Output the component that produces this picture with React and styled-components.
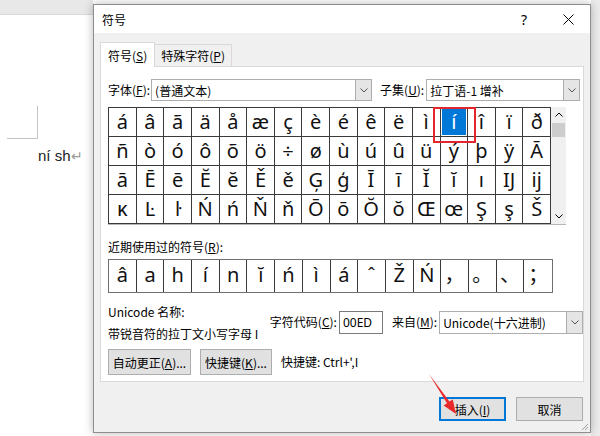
import React from 'react';
import styled, { createGlobalStyle } from 'styled-components';

const GlobalStyle = createGlobalStyle`
  html, body { margin: 0; padding: 0; }
  body {
    width: 600px; height: 436px; overflow: hidden; background: #fff;
    font-family: "Noto Sans CJK SC", "Noto Sans", sans-serif;
    color: #000;
  }
  * { box-sizing: border-box; }
`;

const Stage = styled.div`
  position: relative;
  width: 600px;
  height: 436px;
  display: flex;
  background: #fff;
  overflow: hidden;
`;

const DocArea = styled.div`
  flex: 0 0 93px;
  display: flex;
  flex-direction: column;
  background: #fff;
`;
const DocTopStrip = styled.div`
  height: 15px;
  background: #e8e8e8;
  border-bottom: 1px solid #d8d8d8;
`;
const CropMark = styled.div`
  margin: 91px 0 0 7px;
  width: 31px;
  height: 33px;
  border-right: 1px solid #c4c4c4;
  border-bottom: 1px solid #c4c4c4;
`;
const DocText = styled.div`
  margin: 8px 0 0 38px;
  font-family: "Liberation Sans", Arial, sans-serif;
  font-size: 15px;
  line-height: 18px;
  color: #222;
  white-space: nowrap;
`;
const ReturnMark = styled.span`
  color: #9a9a9a;
  font-size: 14px;
`;

const RightShade = styled.div`
  flex: 1;
  background: #ececec;
`;

const Dialog = styled.div`
  position: relative;
  z-index: 1;
  flex: 0 0 498px;
  margin-top: 4px;
  height: 429px;
  display: flex;
  flex-direction: column;
  background: #f0f0f0;
  border: 1px solid #8e8e8e;
  box-shadow: 0 0 9px rgba(0, 0, 0, 0.28);
`;

const TitleBar = styled.div`
  height: 28px;
  display: flex;
  align-items: center;
  background: #fff;
  padding-left: 8px;
`;
const TitleText = styled.div`
  flex: 1;
  font-size: 12px;
`;
const TitleBtn = styled.div`
  width: 44px;
  height: 28px;
  display: flex;
  align-items: center;
  justify-content: center;
  font-family: "Noto Sans", sans-serif;
  font-size: 14px;
`;

const Body = styled.div`
  flex: 1;
  padding: 9px 6px 0 6px;
  display: flex;
  flex-direction: column;
`;

const TabRow = styled.div`
  display: flex;
  align-items: flex-end;
  height: 25px;
  position: relative;
  z-index: 1;
  margin-bottom: -1px;
`;
const Tab = styled.div`
  height: ${p => (p.$active ? 25 : 23)}px;
  padding: 0 ${p => (p.$active ? 7 : 6)}px;
  display: flex;
  align-items: center;
  font-size: 12px;
  background: ${p => (p.$active ? '#fff' : '#f0f0f0')};
  border: 1px solid #d9d9d9;
  border-bottom: ${p => (p.$active ? 'none' : '1px solid #d9d9d9')};
  margin-left: ${p => (p.$active ? 0 : -1)}px;
  white-space: nowrap;
`;

const Panel = styled.div`
  width: 484px;
  height: 316px;
  background: #fff;
  border: 1px solid #d9d9d9;
  padding: 12px 0 0 7px;
  display: flex;
  flex-direction: column;
`;

const Row = styled.div`
  display: flex;
  align-items: center;
  margin-top: ${p => p.$mt || 0}px;
`;

const Label = styled.div`
  font-size: 12px;
  line-height: 16px;
  white-space: nowrap;
  margin-left: ${p => p.$ml || 0}px;
  margin-right: ${p => p.$mr || 0}px;
`;

const Combo = styled.div`
  display: flex;
  width: ${p => p.$w}px;
  height: ${p => p.$h || 22}px;
  border: 1px solid #adadad;
  background: #fff;
`;
const ComboText = styled.div`
  flex: 1;
  display: flex;
  align-items: center;
  padding-left: 3px;
  font-size: 12px;
  white-space: nowrap;
  overflow: hidden;
`;
const ComboBtn = styled.div`
  width: 16px;
  background: #e5e5e5;
  border-left: 1px solid #adadad;
  display: flex;
  align-items: center;
  justify-content: center;
`;

const TextBox = styled.div`
  width: 44px;
  height: 23px;
  border: 1px solid #7a7a7a;
  background: #fff;
  display: flex;
  align-items: center;
  padding-left: 3px;
  font-family: "Noto Sans", sans-serif;
  font-size: 12px;
`;

const GridWrap = styled.div`
  display: flex;
  width: 458px;
  height: 118px;
  margin-top: 6px;
  border-bottom: 1px solid #b5b5b5;
`;
const CellGrid = styled.div`
  width: 443px;
  display: grid;
  grid-template-columns: repeat(16, 1fr);
  grid-template-rows: repeat(4, 29px);
  border-top: 1px solid #3a3a3a;
  border-left: 1px solid #3a3a3a;
`;
const Cell = styled.div`
  position: ${p => (p.$selected ? 'relative' : 'static')};
  border-right: 1px solid #3a3a3a;
  border-bottom: 1px solid #3a3a3a;
  display: flex;
  align-items: center;
  justify-content: center;
  font-family: "Noto Sans", "Noto Sans CJK SC", sans-serif;
  font-size: 20px;
  line-height: 1;
  padding-bottom: 1px;
  color: ${p => (p.$selected ? '#fff' : '#111')};
  background: ${p => (p.$selected ? '#0078d7' : '#fff')};
  box-shadow: ${p => (p.$selected ? 'inset 0 0 0 1px #fff' : 'none')};
`;
const Highlight = styled.div`
  position: absolute;
  z-index: 2;
  top: -1px;
  left: -8px;
  width: 43px;
  height: 36px;
  border: 2px solid #e3262d;
  pointer-events: none;
`;

const ScrollBar = styled.div`
  width: 15px;
  background: #f0f0f0;
  display: flex;
  flex-direction: column;
  align-items: center;
`;
const ScrollArrow = styled.div`
  width: 15px;
  height: 15px;
  display: flex;
  align-items: center;
  justify-content: center;
`;
const ScrollThumb = styled.div`
  width: 13px;
  height: 14px;
  margin-top: 1px;
  background: #cdcdcd;
`;
const Spacer = styled.div`
  flex: 1;
`;

const RecentRow = styled.div`
  width: 445px;
  height: 34px;
  margin-top: 4px;
  display: grid;
  grid-template-columns: repeat(16, 1fr);
  border: 1px solid #6f6f6f;
`;
const RecentCell = styled.div`
  border-right: ${p => (p.$last ? 'none' : '1px solid #3a3a3a')};
  display: flex;
  align-items: center;
  justify-content: center;
  font-family: "Noto Sans", "Noto Sans CJK SC", sans-serif;
  font-size: 20px;
  line-height: 1;
  padding-bottom: 2px;
  color: #111;
`;

const InfoRow = styled.div`
  display: flex;
  align-items: center;
  margin-top: 7px;
`;
const InfoLeft = styled.div`
  width: 162px;
  display: flex;
  flex-direction: column;
`;
const InfoLine = styled.div`
  height: 22px;
  display: flex;
  align-items: center;
  font-size: 12px;
  white-space: nowrap;
`;

const Button = styled.div`
  width: ${p => p.$w}px;
  height: ${p => p.$h || 26}px;
  display: flex;
  align-items: center;
  justify-content: center;
  background: #e1e1e1;
  border: ${p => (p.$default ? '2px solid #0078d7' : '1px solid #adadad')};
  font-size: 12px;
  white-space: nowrap;
  margin-left: ${p => p.$ml || 0}px;
`;

const Footer = styled.div`
  display: flex;
  justify-content: flex-end;
  gap: 10px;
  margin-top: 15px;
  padding-right: 1px;
`;

const Grip = styled.svg`
  position: absolute;
  right: 1px;
  bottom: 1px;
`;

const Arrow = styled.svg`
  position: absolute;
  left: 0;
  top: 0;
  pointer-events: none;
  z-index: 5;
`;

const Chevron = ({ up, color = '#000' }) => (
  <svg width="8" height="5" viewBox="0 0 8 5">
    <path
      d={up ? 'M0.5 4.5 L4 1 L7.5 4.5' : 'M0.5 0.5 L4 4 L7.5 0.5'}
      fill="none"
      stroke={color}
      strokeWidth="1"
    />
  </svg>
);

const U = styled.span`
  text-decoration: underline;
  text-underline-offset: 1px;
`;

const gridRows = [
  'á â ã ä å æ ç è é ê ë ì í î ï ð',
  'ñ ò ó ô õ ö ÷ ø ù ú û ü ý þ ÿ Ā',
  'ā Ē ē Ĕ ĕ Ě ě Ģ ģ Ī ī Ĭ ĭ ı Ĳ ĳ',
  'ĸ Ŀ ŀ Ń ń Ň ň Ō ō Ŏ ŏ Œ œ Ş ş Š',
].map(r => r.split(' '));

const recent = ['â', 'a', 'h', 'í', 'n', 'ĭ', 'ń', 'ì', 'á', 'ˆ', 'Ž', 'Ń', '，', '。', '、', '；'];

export default function App() {
  return (
    <>
      <GlobalStyle />
      <Stage>
        <DocArea>
          <DocTopStrip />
          <CropMark />
          <DocText>
            ní sh<ReturnMark>↵</ReturnMark>
          </DocText>
        </DocArea>

        <Dialog>
          <TitleBar>
            <TitleText>符号</TitleText>
            <TitleBtn>?</TitleBtn>
            <TitleBtn>
              <svg width="11" height="11" viewBox="0 0 11 11">
                <path d="M0.5 0.5 L10.5 10.5 M10.5 0.5 L0.5 10.5" stroke="#000" strokeWidth="1" />
              </svg>
            </TitleBtn>
          </TitleBar>

          <Body>
            <TabRow>
              <Tab $active>符号(<U>S</U>)</Tab>
              <Tab>特殊字符(<U>P</U>)</Tab>
            </TabRow>
            <Panel>
              <Row>
                <Label $mr={1}>字体(<U>F</U>):</Label>
                <Combo $w={221}>
                  <ComboText>(普通文本)</ComboText>
                  <ComboBtn><Chevron color="#555" /></ComboBtn>
                </Combo>
                <Label $ml={8} $mr={2}>子集(<U>U</U>):</Label>
                <Combo $w={154}>
                  <ComboText>拉丁语-1 增补</ComboText>
                  <ComboBtn><Chevron color="#555" /></ComboBtn>
                </Combo>
              </Row>

              <GridWrap>
                <CellGrid>
                  {gridRows.map((row, ri) =>
                    row.map((ch, ci) => {
                      const sel = ri === 0 && ci === 12;
                      return (
                        <Cell key={`${ri}-${ci}`} $selected={sel}>
                          {ch}
                          {sel && <Highlight />}
                        </Cell>
                      );
                    })
                  )}
                </CellGrid>
                <ScrollBar>
                  <ScrollArrow><Chevron up /></ScrollArrow>
                  <ScrollThumb />
                  <Spacer />
                  <ScrollArrow><Chevron /></ScrollArrow>
                </ScrollBar>
              </GridWrap>

              <Row $mt={14}>
                <Label>近期使用过的符号(<U>R</U>):</Label>
              </Row>
              <RecentRow>
                {recent.map((ch, i) => (
                  <RecentCell key={i} $last={i === recent.length - 1}>{ch}</RecentCell>
                ))}
              </RecentRow>

              <InfoRow>
                <InfoLeft>
                  <InfoLine>Unicode 名称:</InfoLine>
                  <InfoLine>带锐音符的拉丁文小写字母 I</InfoLine>
                </InfoLeft>
                <Label $mr={2}>字符代码(<U>C</U>):</Label>
                <TextBox>00ED</TextBox>
                <Label $ml={9} $mr={2}>来自(<U>M</U>):</Label>
                <Combo $w={144} $h={23}>
                  <ComboText>Unicode(十六进制)</ComboText>
                  <ComboBtn><Chevron color="#555" /></ComboBtn>
                </Combo>
              </InfoRow>

              <Row $mt={5}>
                <Button $w={83}>自动更正(<U>A</U>)...</Button>
                <Button $w={72} $ml={9}>快捷键(<U>K</U>)...</Button>
                <Label $ml={9}>快捷键: Ctrl+',I</Label>
              </Row>
            </Panel>

            <Footer>
              <Button $w={67} $h={24} $default>插入(<U>I</U>)</Button>
              <Button $w={67} $h={24}>取消</Button>
            </Footer>
          </Body>

          <Grip width="10" height="10" viewBox="0 0 10 10">
            <path d="M9 3 L3 9 M9 6 L6 9" stroke="#a0a0a0" strokeWidth="1" />
          </Grip>
        </Dialog>

        <RightShade />

        <Arrow width="600" height="436" viewBox="0 0 600 436">
          <polygon
            points="429,374 449.4,401.6 452.8,399.4 456,414 443.6,405.4 447,403.2"
            fill="#e8282b"
          />
        </Arrow>
      </Stage>
    </>
  );
}
